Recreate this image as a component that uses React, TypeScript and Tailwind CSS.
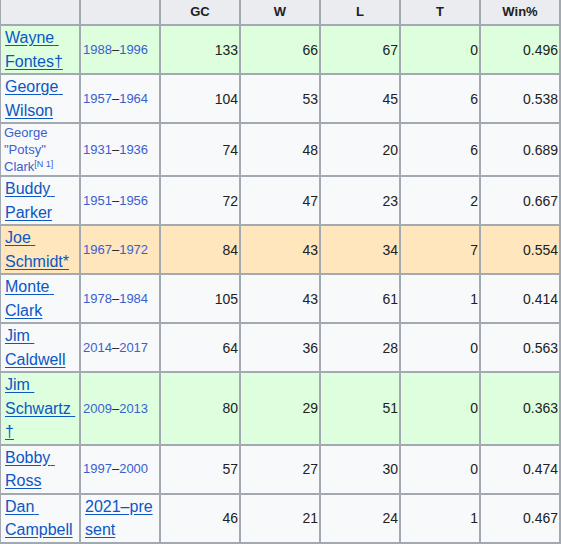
import { Fragment } from 'react';

type Coach = {
  name: string;
  from: string;
  to?: string;
  gc: number;
  w: number;
  l: number;
  t: number;
  pct: string;
  bg: string;
  plain?: boolean;
};

const coaches: Coach[] = [
  { name: 'Wayne Fontes†', from: '1988', to: '1996', gc: 133, w: 66, l: 67, t: 0, pct: '0.496', bg: 'bg-[#ddffdd]' },
  { name: 'George Wilson', from: '1957', to: '1964', gc: 104, w: 53, l: 45, t: 6, pct: '0.538', bg: 'bg-[#f8f9fa]' },
  { name: 'George "Potsy" Clark', from: '1931', to: '1936', gc: 74, w: 48, l: 20, t: 6, pct: '0.689', bg: 'bg-[#f8f9fa]', plain: true },
  { name: 'Buddy Parker', from: '1951', to: '1956', gc: 72, w: 47, l: 23, t: 2, pct: '0.667', bg: 'bg-[#f8f9fa]' },
  { name: 'Joe Schmidt*', from: '1967', to: '1972', gc: 84, w: 43, l: 34, t: 7, pct: '0.554', bg: 'bg-[#ffe6bd]' },
  { name: 'Monte Clark', from: '1978', to: '1984', gc: 105, w: 43, l: 61, t: 1, pct: '0.414', bg: 'bg-[#f8f9fa]' },
  { name: 'Jim Caldwell', from: '2014', to: '2017', gc: 64, w: 36, l: 28, t: 0, pct: '0.563', bg: 'bg-[#f8f9fa]' },
  { name: 'Jim Schwartz †', from: '2009', to: '2013', gc: 80, w: 29, l: 51, t: 0, pct: '0.363', bg: 'bg-[#ddffdd]' },
  { name: 'Bobby Ross', from: '1997', to: '2000', gc: 57, w: 27, l: 30, t: 0, pct: '0.474', bg: 'bg-[#f8f9fa]' },
  { name: 'Dan Campbell', from: '2021–present', gc: 46, w: 21, l: 24, t: 1, pct: '0.467', bg: 'bg-[#f8f9fa]' },
];

const headers = ['', '', 'GC', 'W', 'L', 'T', 'Win%'];

const linkCls = 'text-base leading-[23.5px] text-[#0b57c4] underline underline-offset-2 whitespace-pre-wrap';

export default function App() {
  return (
    <div className="h-screen overflow-hidden bg-white font-['Liberation_Sans',Arial,sans-serif] text-[#202122]">
      <div className="-ml-px -mt-[2px] grid w-fit grid-cols-[repeat(7,78px)] gap-[2px] bg-[#a2a9b1] p-[2px]">
        {headers.map((h, i) => (
          <div key={i} className="flex h-6 items-center justify-center bg-[#eaecf0] text-[13px] font-bold">
            {h}
          </div>
        ))}

        {coaches.map((c) => (
          <Fragment key={c.name}>
            {/* coach name */}
            <div className={`flex items-center ${c.plain ? 'pl-[3px] pr-1' : 'px-1'} ${c.bg}`}>
              {c.plain ? (
                <span className="text-[13px] leading-[17px] text-[#3a5fd0]">
                  {c.name}
                  <sup className="text-[9px]">[N 1]</sup>
                </span>
              ) : (
                <a href="#" className={linkCls}>{c.name}</a>
              )}
            </div>

            {/* years */}
            {c.to ? (
              <div className={`flex items-center pl-[2px] text-[13px] ${c.bg}`}>
                <span className="text-[#3a5fd0]">{c.from}</span>
                <span>–</span>
                <span className="text-[#3a5fd0]">{c.to}</span>
              </div>
            ) : (
              <div className={`flex items-center px-1 ${c.bg}`}>
                <a href="#" className={`${linkCls} break-all`}>{c.from}</a>
              </div>
            )}

            {[c.gc, c.w, c.l, c.t, c.pct].map((v, i) => (
              <div key={i} className={`flex items-center justify-end pr-px text-sm ${c.bg}`}>
                {v}
              </div>
            ))}
          </Fragment>
        ))}
      </div>
    </div>
  );
}
